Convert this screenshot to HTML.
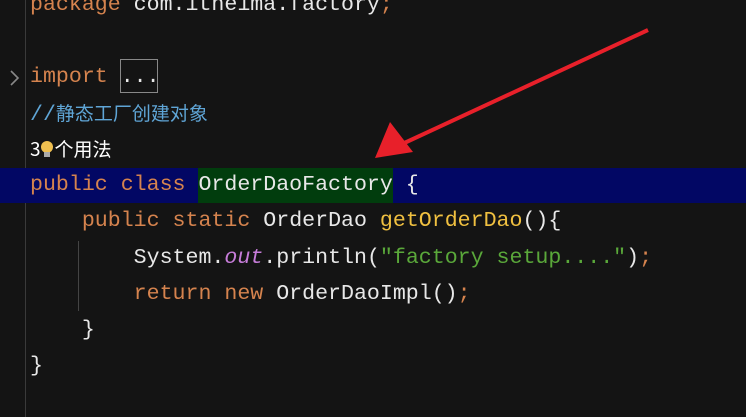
<!DOCTYPE html><html><head><style>
body{margin:0;width:746px;height:417px;background:#141414;overflow:hidden;position:relative;font-family:"Liberation Mono",monospace;font-size:21.6px;color:#e8e8e8}
.l{position:absolute;left:30px;white-space:pre;line-height:36px;height:36px}
.k{color:#d5834e}.f{color:#f0c040}.s{color:#5aa83a}.c{color:#5fa5d6;font-family:"Liberation Mono","Noto Sans CJK SC",monospace}.o{color:#c77dda;font-style:italic}
</style></head><body>
<div style="position:absolute;left:25px;top:0;width:1px;height:417px;background:#3a3a3a"></div>
<div style="position:absolute;left:0;top:168px;width:746px;height:35px;background:#020764"></div>
<div style="position:absolute;left:198px;top:168px;width:195px;height:35px;background:#013d0d"></div>
<div style="position:absolute;left:78px;top:241px;width:1px;height:70px;background:#444"></div>
<div style="position:absolute;left:120px;top:59px;width:38px;height:34px;border:1px solid #888;box-sizing:border-box"></div>
<div class="l" style="top:-13px"><span class="k">package</span> com.itheima.factory<span class="k">;</span></div>
<svg width="12" height="16" style="position:absolute;left:9px;top:70px"><path d="M2 1 L9 8 L2 15" stroke="#888" stroke-width="1.6" fill="none"/></svg>
<div class="l" style="top:59px"><span class="k">import</span> ...</div>
<div class="l c" style="top:95px">//<span style="font-family:'Noto Sans CJK SC',sans-serif;font-size:19px">静态工厂创建对象</span></div>
<div class="l" style="top:131px;font-family:'Noto Sans CJK SC',sans-serif;font-size:19px;color:#fff">3<span style="display:inline-block;width:14px"></span>个用法</div>
<svg width="14" height="20" style="position:absolute;left:40px;top:140px"><circle cx="7" cy="7" r="6" fill="#f0c050"/><rect x="4" y="12" width="6" height="5" fill="#aaa"/></svg>
<div class="l" style="top:167px"><span class="k">public class</span> OrderDaoFactory {</div>
<div class="l" style="top:203px">    <span class="k">public static</span> OrderDao <span class="f">getOrderDao</span>(){</div>
<div class="l" style="top:240px">        System.<span class="o">out</span>.println(<span class="s">"factory setup...."</span>)<span class="k">;</span></div>
<div class="l" style="top:276px">        <span class="k">return new</span> OrderDaoImpl()<span class="k">;</span></div>
<div class="l" style="top:312px">    }</div>
<div class="l" style="top:348px">}</div>
<svg width="746" height="417" style="position:absolute;left:0;top:0"><line x1="648" y1="30" x2="400" y2="145" stroke="#e8202a" stroke-width="4"/><polygon points="375,158 390,122 413,152" fill="#e8202a"/></svg>
</body></html>
